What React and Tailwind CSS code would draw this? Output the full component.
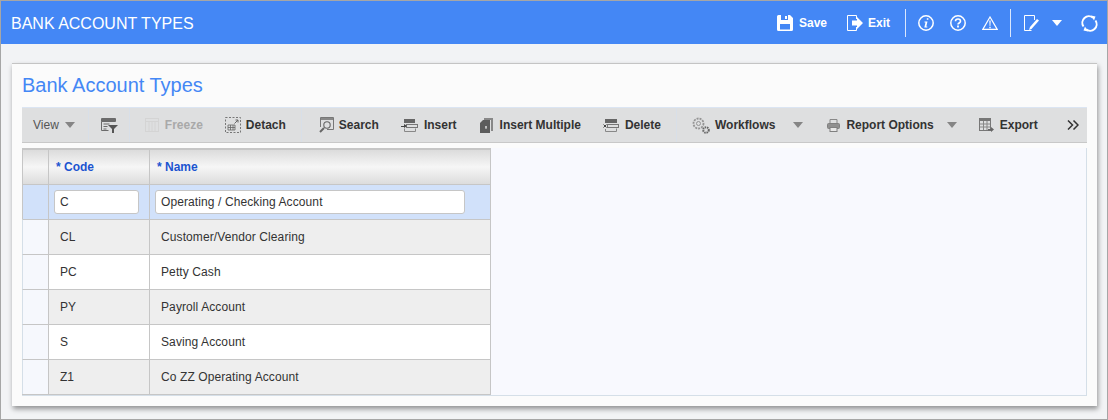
import React from 'react';

const ink = '#6b6b6b';

const Svg = ({ w = 16, h = 16, className = '', children }) => (
  <svg width={w} height={h} viewBox={`0 0 ${w} ${h}`} fill="none" className={`shrink-0 ${className}`}>
    {children}
  </svg>
);

const Caret = ({ color = '#858585', className = '' }) => (
  <svg width="10" height="6" viewBox="0 0 10 6" className={`shrink-0 ${className}`}>
    <path d="M0 0h10L5 6z" fill={color} />
  </svg>
);

const Sep = ({ className = '' }) => <div className={`w-px h-[34px] bg-[#d8dfe8] shrink-0 ${className}`} />;

// toolbar icons
const FilterIcon = () => (
  <Svg w={17} h={15}>
    <path d="M.5.5h14v3H.5zM.5 3.5v9h7" stroke={ink} />
    <path d="M.5 1h14v2H.5z" fill={ink} />
    <path d="M2.500 6h6M2.500 8.500h4M2.500 11h3" stroke={ink} />
    <path d="M7 7h10l-4 4v4h-2v-4z" fill="#555" />
  </Svg>
);
const FreezeIcon = () => (
  <Svg>
    <rect x="1.500" y="1.500" width="13" height="13" stroke="#d4d4d4" />
    <path d="M1.500 4.500h13M5 5v9M8 5v9M11 5v9" stroke="#d4d4d4" />
  </Svg>
);
const DetachIcon = () => (
  <Svg>
    <rect x=".5" y=".5" width="15" height="15" stroke="#777" strokeDasharray="2 1.500" />
    <path d="M3 8h7v5H3zM3 10.500h7M5.500 8v5M8 8v5" stroke="#666" strokeWidth=".8" />
    <path d="M9.500 6.500L13 3M10.500 3H13v2.500" stroke="#666" />
  </Svg>
);
const SearchIcon = () => (
  <Svg w={15} h={16}>
    <path d="M1.500 10V.5h13v12H8" stroke="#777" />
    <rect x="2" y="1" width="12" height="2" fill="#888" />
    <circle cx="8" cy="8" r="3.200" stroke="#666" strokeWidth="1.100" />
    <path d="M5 11l-4 4" stroke="#666" strokeWidth="2" />
  </Svg>
);
const InsertIcon = () => (
  <Svg w={17} h={13}>
    <rect x="3.500" y=".5" width="10" height="3" fill="#666" stroke="#666" />
    <rect x="5.500" y="5.500" width="11" height="3" stroke="#777" />
    <path d="M3.500 9.500v3h11v-3" stroke="#888" />
    <path d="M0 7h3V5l3 2-3 2V8H0z" fill="#444" />
  </Svg>
);
const MultiIcon = () => (
  <Svg w={13} h={15}>
    <path d="M4 0h9v13h-2V2H4z" fill="#888" />
    <path d="M3 2h7v13H0V5z" fill="#5c5c5c" />
    <path d="M5 9h2M6 8v3" stroke="#ddd" />
  </Svg>
);
const DeleteIcon = () => (
  <Svg w={16} h={13}>
    <rect x="2.500" y=".5" width="11" height="3" fill="#666" stroke="#666" />
    <rect x="4.500" y="5.500" width="11" height="3" stroke="#777" />
    <path d="M2.500 10v2.500h11V9.500" stroke="#888" />
    <path d="M.5 5.500l3 3M3.500 5.500l-3 3" stroke="#444" />
  </Svg>
);
const GearsIcon = () => (
  <Svg w={18} h={17}>
    <circle cx="6.500" cy="6.500" r="5" stroke="#949494" strokeWidth="1.800" strokeDasharray="2 1" />
    <circle cx="6.500" cy="6.500" r="2" stroke="#949494" />
    <circle cx="14" cy="13" r="2.800" stroke="#666" strokeWidth="2" strokeDasharray="1.500 .8" />
  </Svg>
);
const PrinterIcon = () => (
  <Svg w={13} h={13}>
    <path d="M3 5V.5h7V5" stroke="#888" />
    <rect x=".5" y="4.500" width="12" height="5" rx="1" fill="#909090" stroke="#808080" />
    <rect x="3" y="8.500" width="7" height="4" fill="#e8e8e8" stroke="#808080" />
  </Svg>
);
const ExportIcon = () => (
  <Svg w={15} h={14}>
    <rect x=".5" y=".5" width="11" height="12" stroke="#777" />
    <rect x="1" y="1" width="10" height="2" fill="#777" />
    <path d="M1 6h10M1 9h10M4.500 3v9M8 3v9" stroke="#888" />
    <path d="M9 11h3V9l3 2.500-3 2.500v-1.500H9z" fill="#666" />
  </Svg>
);

const ToolItem = ({ icon, label, className = '', gap = 'gap-[5px]', muted }) => (
  <div className={`flex items-center shrink-0 ${gap} ${className}`}>
    {icon}
    <span className={`text-[12px] font-bold whitespace-nowrap ${muted ? 'text-[#a9a9a9]' : 'text-[#333]'}`}>{label}</span>
  </div>
);

const rows = [
  ['CL', 'Customer/Vendor Clearing'],
  ['PC', 'Petty Cash'],
  ['PY', 'Payroll Account'],
  ['S', 'Saving Account'],
  ['Z1', 'Co ZZ Operating Account'],
];

function App() {
  return (
    <div className="w-[1108px] h-[420px] bg-[#f2f3f5] border border-[#a6a6a6] overflow-hidden text-[#333]" style={{ fontFamily: '"Liberation Sans", Arial, sans-serif' }}>
      {/* Header */}
      <div className="h-[43px] bg-[#4487f5] flex items-center text-white">
        <h1 className="ml-[10px] mt-[2px] text-[16px] font-normal whitespace-nowrap">BANK ACCOUNT TYPES</h1>
        <div className="ml-auto pt-[1px] flex items-center">
          <div className="flex items-center gap-[6px]">
            <svg width="16" height="16" viewBox="0 0 16 16">
              <path d="M0 1.500A1.500 1.500 0 0 1 1.500 0H13l3 3v11.500a1.500 1.500 0 0 1-1.500 1.500h-13A1.500 1.500 0 0 1 0 14.500z" fill="#fff" />
              <path d="M4 0h7v5H4z" fill="#4487f5" />
              <path d="M8 1h2v3H8z" fill="#fff" />
              <path d="M3 9h10v5.500H3z" fill="#4487f5" />
            </svg>
            <span className="text-[12px] font-bold whitespace-nowrap">Save</span>
          </div>
          <div className="ml-[20px] flex items-center gap-[5px]">
            <svg width="16" height="16" viewBox="0 0 16 16" fill="none">
              <path d="M9.500 4V.5H.5v15h9V12" stroke="#fff" />
              <path d="M5 5.500h5V2l6 6-6 6v-3.500H5z" fill="#fff" />
            </svg>
            <span className="text-[12px] font-bold whitespace-nowrap">Exit</span>
          </div>
          <div className="ml-[15px] w-px h-[28px] bg-white/80" />
          <svg className="ml-[12px]" width="16" height="16" viewBox="0 0 16 16" fill="none">
            <circle cx="8" cy="8" r="7.200" stroke="#fff" strokeWidth="1.500" />
            <path d="M8.800 3.200h1.600v1.600H8.800zM6.500 6.500h3l-1.200 5h1v1h-3l1.200-5h-1z" fill="#fff" />
          </svg>
          <svg className="ml-[16px]" width="16" height="16" viewBox="0 0 16 16" fill="none">
            <circle cx="8" cy="8" r="7.200" stroke="#fff" strokeWidth="1.500" />
            <path d="M5.500 6.200C5.500 4.800 6.600 4 8 4s2.500.8 2.500 2.200c0 1.800-2.500 1.800-2.500 3.400" stroke="#fff" strokeWidth="1.600" />
            <path d="M7.100 10.600h1.800v1.800H7.100z" fill="#fff" />
          </svg>
          <svg className="ml-[16px]" width="16" height="14" viewBox="0 0 16 14" fill="none">
            <path d="M8 1L.8 13.400h14.400z" stroke="#fff" strokeWidth="1.200" />
            <path d="M7.300 4.500h1.400L8.400 10h-.8zM7.300 10.800h1.400v1.400H7.300z" fill="#fff" />
          </svg>
          <div className="ml-[12px] w-px h-[28px] bg-white/80" />
          <svg className="ml-[13px]" width="15" height="16" viewBox="0 0 15 16" fill="none">
            <path d="M10.500 5V.5H.5v15h7" stroke="#fff" />
            <path d="M5 15l1-3 7-8 2 1.500-7.500 8.500z" fill="#fff" />
          </svg>
          <Caret color="#fff" className="ml-[13px]" />
          <svg className="ml-[19px] mr-[9px]" width="17" height="17" viewBox="0 0 17 17" fill="none">
            <path d="M2.500 11.500A6.500 6.500 0 0 1 12 2.800M14.500 5.500A6.500 6.500 0 0 1 5 14.200" stroke="#fff" strokeWidth="2" />
            <path d="M10 .5l4.500 1-1.500 4zM7 16.500l-4.500-1 1.500-4z" fill="#fff" />
          </svg>
        </div>
      </div>

      {/* Card */}
      <div className="ml-[11px] mr-[10px] mt-[19px] h-[343px] bg-[#fbfbfb] border-t border-[#c4c4c4] shadow-[1px_3px_5px_rgba(0,0,0,0.4)] px-[10px]">
        <h2 className="pt-[9px] h-[43px] text-[20px] leading-[25px] font-normal text-[#4487f5] whitespace-nowrap">Bank Account Types</h2>

        {/* Toolbar */}
        <div className="h-[36px] bg-[#dedfe0] border-t border-[#dbe5f3] border-b border-b-[#c8c8c8] flex items-center">
          <div className="ml-[11px] flex items-center gap-[6px] shrink-0">
            <span className="text-[12px] text-[#555]">View</span>
            <Caret />
          </div>
          <Sep className="ml-[13px]" />
          <div className="ml-[12px] shrink-0"><FilterIcon /></div>
          <Sep className="ml-[11px]" />
          <ToolItem muted className="ml-[14px]" icon={<FreezeIcon />} label="Freeze" />
          <ToolItem className="ml-[22px]" icon={<DetachIcon />} label="Detach" />
          <Sep className="ml-[15px]" />
          <ToolItem className="ml-[17px]" icon={<SearchIcon />} label="Search" />
          <ToolItem className="ml-[22px]" gap="gap-[6px]" icon={<InsertIcon />} label="Insert" />
          <ToolItem className="ml-[23px]" gap="gap-[7px]" icon={<MultiIcon />} label="Insert Multiple" />
          <ToolItem className="ml-[22px]" gap="gap-[6px]" icon={<DeleteIcon />} label="Delete" />
          <Sep className="ml-[15px]" />
          <ToolItem className="ml-[15px]" gap="gap-[5px]" icon={<GearsIcon />} label="Workflows" />
          <Caret className="ml-[18px]" />
          <ToolItem className="ml-[24px]" gap="gap-[6px]" icon={<PrinterIcon />} label="Report Options" />
          <Caret className="ml-[13px]" />
          <ToolItem className="ml-[22px]" gap="gap-[6px]" icon={<ExportIcon />} label="Export" />
          <svg className="ml-[29px] shrink-0" width="12" height="10" viewBox="0 0 12 10" fill="none">
            <path d="M1 .5L5.500 5 1 9.500M6.500 .5L11 5 6.500 9.500" stroke="#333" strokeWidth="1.500" />
          </svg>
        </div>

        {/* Grid area */}
        <div className="mt-[5px] h-[248px] bg-[#f8f9fe] border-r border-b border-[#d5dfe8]">
          <div className="w-[469px] border-b border-[#c6c6c6]">
            <div className="flex h-[36px] border-t-2 border-[#c6c6c6] border-l border-r bg-gradient-to-b from-[#dcdcdc] via-[#f6f6f6] to-[#dcdcdc]">
              <div className="w-[26px] shrink-0 border-r border-[#c6c6c6]" />
              <div className="w-[101px] shrink-0 border-r border-[#c6c6c6] pl-[7px] flex items-center text-[12px] font-bold text-[#1c54d0]">* Code</div>
              <div className="flex-1 pl-[7px] flex items-center text-[12px] font-bold text-[#1c54d0]">* Name</div>
            </div>
            <div className="flex h-[35px] border-t border-l border-r border-[#c6c6c6] bg-[#d1e1fa]">
              <div className="w-[26px] shrink-0 border-r border-[#c6c6c6]" />
              <div className="w-[101px] shrink-0 border-r border-[#c6c6c6] pl-[5px] flex items-center">
                <div className="w-[85px] h-[24px] bg-white rounded-[3px] border border-[#c6c6c6] pl-[5px] flex items-center text-[12px]">C</div>
              </div>
              <div className="flex-1 pl-[5px] flex items-center">
                <div className="w-[310px] h-[24px] bg-white rounded-[3px] border border-[#c6c6c6] pl-[5px] flex items-center text-[12px] tracking-[0.1px] whitespace-nowrap">Operating / Checking Account</div>
              </div>
            </div>
            {rows.map(([code, name], i) => (
              <div key={code} className={`flex h-[35px] border-t border-r border-[#c6c6c6] border-l border-l-[#d5dfe8] ${i % 2 === 0 ? 'bg-[#eeeeee]' : 'bg-white'}`}>
                <div className="w-[26px] shrink-0 border-r border-[#c6c6c6] bg-[#f6f8fd]" />
                <div className="w-[101px] shrink-0 border-r border-[#c6c6c6] pl-[11px] flex items-center text-[12px]">{code}</div>
                <div className="flex-1 pl-[11px] flex items-center text-[12px] tracking-[0.1px] whitespace-nowrap">{name}</div>
              </div>
            ))}
          </div>
        </div>
      </div>
    </div>
  );
}

export default App;
